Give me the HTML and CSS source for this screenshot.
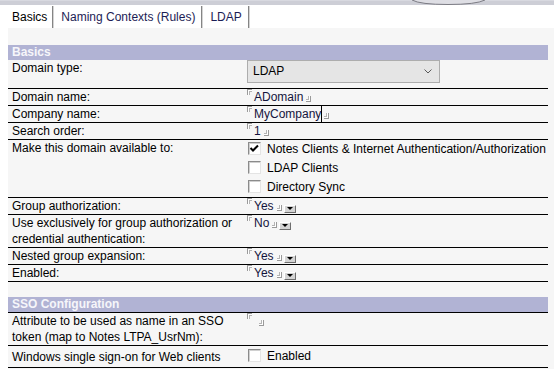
FILE: index.html
```html
<!DOCTYPE html>
<html lang="en">
<head>
    <meta charset="UTF-8">
    <title>Domain - Basics</title>
    <link rel="stylesheet" href="styles.css">
</head>
<body>
    <div class="banner">
        <svg width="554" height="5" viewBox="0 0 554 5">
            <rect width="554" height="5" fill="#cdced6"/>
            <path d="M0 0.5H554" stroke="#d8d9e0"/>
            <path d="M412 0 Q420 4.5 448 4.5 Q476 4.5 485 0" stroke="#7c7c84" fill="#dedee4"/>
        </svg>
    </div>

    <div class="tabs">
        <div class="tab active">Basics</div>
        <div class="tab">Naming Contexts (Rules)</div>
        <div class="tab">LDAP</div>
    </div>

    <div class="page">
        <div class="form">
            <div class="section">Basics</div>

            <div class="row row-select">
                <div class="label">Domain type:</div>
                <div class="value">
                    <div class="select">
                        <span>LDAP</span>
                        <svg width="8" height="5" viewBox="0 0 8 5"><polyline points="0.5,0.5 4,4 7.5,0.5" fill="none" stroke="#5a5a5a"/></svg>
                    </div>
                </div>
            </div>

            <div class="row">
                <div class="label">Domain name:</div>
                <div class="value"><span class="fl"></span>ADomain<span class="fr"></span></div>
            </div>

            <div class="row">
                <div class="label">Company name:</div>
                <div class="value"><span class="fl"></span>MyCompany<span class="caret"></span><span class="fr"></span></div>
            </div>

            <div class="row">
                <div class="label">Search order:</div>
                <div class="value"><span class="fl"></span>1<span class="fr"></span></div>
            </div>

            <div class="row row-checks">
                <div class="label">Make this domain available to:</div>
                <div class="value">
                    <div class="check"><span class="cb checked"><svg width="11" height="11" viewBox="0 0 11 11"><polyline points="1.5,5 4,7.5 9,2.5" fill="none" stroke="#000" stroke-width="2"/></svg></span>Notes Clients &amp; Internet Authentication/Authorization</div>
                    <div class="check"><span class="cb"></span>LDAP Clients</div>
                    <div class="check"><span class="cb"></span>Directory Sync</div>
                </div>
            </div>

            <div class="row">
                <div class="label">Group authorization:</div>
                <div class="value"><span class="fl"></span>Yes<span class="fr"></span><span class="dd"></span></div>
            </div>

            <div class="row">
                <div class="label">Use exclusively for group authorization or credential authentication:</div>
                <div class="value"><span class="fl"></span>No<span class="fr"></span><span class="dd"></span></div>
            </div>

            <div class="row">
                <div class="label">Nested group expansion:</div>
                <div class="value"><span class="fl"></span>Yes<span class="fr"></span><span class="dd"></span></div>
            </div>

            <div class="row">
                <div class="label">Enabled:</div>
                <div class="value"><span class="fl"></span>Yes<span class="fr"></span><span class="dd"></span></div>
            </div>

            <div class="section sso">SSO Configuration</div>

            <div class="row">
                <div class="label">Attribute to be used as name in an SSO token (map to Notes LTPA_UsrNm):</div>
                <div class="value"><span class="fl"></span><span class="fr empty"></span></div>
            </div>

            <div class="row row-checks row-single">
                <div class="label">Windows single sign-on for Web clients</div>
                <div class="value">
                    <div class="check"><span class="cb"></span>Enabled</div>
                </div>
            </div>
        </div>
    </div>
</body>
</html>
```

FILE: styles.css
```css
body {
    margin: 0;
    background: #fff;
    font-family: "Liberation Sans", Arial, sans-serif;
    font-size: 12px;
    color: #000;
    overflow: hidden;
}
.banner {
    height: 5px;
}
.banner svg {
    display: block;
}
.tabs {
    display: flex;
    height: 23px;
    padding-left: 8px;
}
.tab {
    box-sizing: border-box;
    height: 22px;
    margin-top: 1px;
    padding: 1px 6px 0 8px;
    line-height: 21px;
    color: #1d1d55;
    border-right: 1px solid #858585;
    box-shadow: 1px 0 0 #d4d4d4;
}
.tab.active {
    padding-left: 4px;
    padding-right: 5px;
    color: #000;
}
.page {
    margin-left: 8px;
    background: #f6f6f6;
    padding-top: 17px;
    height: 341px;
    box-sizing: border-box;
}
.form {
    width: 540px;
}
.section {
    height: 15px;
    line-height: 15px;
    padding-left: 4px;
    background: #b1b3d4;
    color: #f6f6fa;
    font-weight: bold;
}
.section.sso {
    margin-top: 15px;
    border-bottom: 1px solid #000;
}
.row {
    display: grid;
    grid-template-columns: 236px 1fr;
    border-bottom: 1px solid #000;
}
.label {
    padding: 0 4px;
    line-height: 16px;
}
.value {
    padding: 1px 0 0 3px;
    line-height: 15px;
    color: #14143c;
    white-space: nowrap;
}
.row-select {
    height: 28px;
}
.row-select .value {
    padding-top: 0;
}
.select {
    box-sizing: border-box;
    width: 193px;
    height: 23px;
    display: flex;
    align-items: center;
    justify-content: space-between;
    padding: 0 7px 0 5px;
    background: #e5e5e5;
    border: 1px solid #adadad;
    color: #000;
}
.select svg {
    display: block;
}
.fl, .fr {
    display: inline-block;
    width: 4px;
    height: 5px;
}
.fl {
    vertical-align: top;
    margin: -1px 2px 0 0;
    border-top: 1px solid #9a9a9a;
    border-left: 1px solid #9a9a9a;
    box-shadow: inset 1px 1px 0 #fff, inset 2px 2px 0 #b4b4b4;
}
.fr {
    vertical-align: baseline;
    margin: 0 0 -1px 3px;
    border-bottom: 1px solid #9a9a9a;
    border-right: 1px solid #9a9a9a;
    box-shadow: inset -1px -1px 0 #fff, inset -2px -2px 0 #b4b4b4;
}
.fr.empty {
    margin-left: 5px;
}
.caret {
    display: inline-block;
    width: 0;
    height: 16px;
    vertical-align: top;
    margin-top: -1px;
    border-left: 1px solid #000;
}
.caret + .fr {
    margin-left: 2px;
}
.dd {
    display: inline-flex;
    align-items: center;
    justify-content: center;
    box-sizing: border-box;
    width: 12px;
    height: 8px;
    margin: 0 0 1px 2px;
    vertical-align: baseline;
    background: #d4d4d4;
    border: 1px solid;
    border-color: #fff #6e6e6e #6e6e6e #fff;
}
.dd::after {
    content: "";
    width: 0;
    height: 0;
    border-left: 3px solid transparent;
    border-right: 3px solid transparent;
    border-top: 3px solid #000;
}
.row-checks .value {
    padding: 0 0 0 4px;
}
.check {
    display: flex;
    align-items: flex-start;
    height: 19px;
    line-height: 16px;
    padding-top: 1px;
    box-sizing: border-box;
    gap: 6px;
    color: #000;
}
.cb {
    box-sizing: border-box;
    width: 13px;
    height: 13px;
    margin-top: 1px;
    flex: none;
    background: #fff;
    border: 1px solid;
    border-color: #8b8b8b #e4e4e4 #e4e4e4 #8b8b8b;
    box-shadow: inset 1px 1px 0 #d0d0d0;
}
.cb svg {
    display: block;
}
.row-single .label {
    padding-top: 3px;
}
.row-single .value {
    padding-top: 1px;
    padding-bottom: 1px;
}
```
